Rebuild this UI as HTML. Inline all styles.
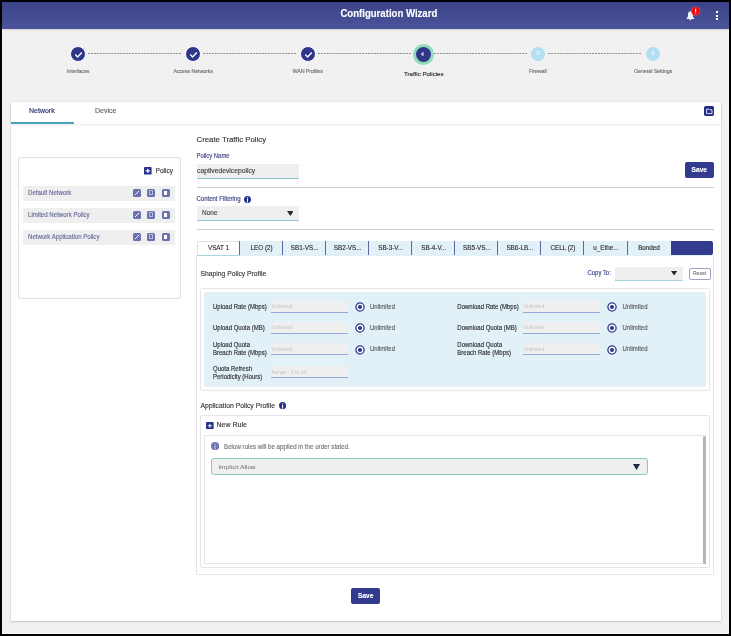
<!DOCTYPE html>
<html><head><meta charset="utf-8">
<style>
*{box-sizing:border-box;margin:0;padding:0}
html,body{width:731px;height:636px;overflow:hidden;background:#000;font-family:"Liberation Sans",sans-serif}
.a{position:absolute}
.t{position:absolute;white-space:nowrap;line-height:1}
.t,.lbl,.unl,.rowt{-webkit-text-stroke-width:0.12px}
#frame{position:absolute;left:2px;top:2px;width:727px;height:632px;background:#f1f1f1}
#hdr{position:absolute;left:2px;top:2px;width:727px;height:27px;background:linear-gradient(#3b4488,#4c5499);box-shadow:0 1px 1.5px rgba(60,60,40,.18)}
.stepc{position:absolute;width:16px;height:16px;border-radius:50%;background:#2f3689;border:1px solid #fff}
.dash{position:absolute;height:1.2px;background-image:linear-gradient(90deg,#8f8f8f 0,#8f8f8f 58%,transparent 58%);background-size:2.95px 1.2px}
.slab{color:#6e6e6e;font-size:5.4px;letter-spacing:-0.13px}
#card{position:absolute;left:11px;top:101.8px;width:710px;height:519.4px;background:#fff;box-shadow:0 1px 1.5px rgba(0,0,0,.16),0 0 1.5px rgba(0,0,0,.1)}
.ico{position:absolute;width:8px;height:8px;border-radius:1.5px;background:#6b70ae}
.row{position:absolute;left:23px;width:152px;height:15px;background:#efefef}
.rowt{position:absolute;left:5px;top:4.4px;font-size:6.1px;color:#64689a;transform:scaleY(1.08);transform-origin:0 85%;white-space:nowrap;line-height:1}
.tab{position:absolute;top:241px;height:14px;width:43px;background:#e2f0f7;border-left:1.5px solid #4c5290;font-size:6px;color:#333;text-align:center;line-height:14px}
.lbl{position:absolute;font-size:6px;color:#2a2a2a;-webkit-text-stroke:0.12px #2a2a2a;line-height:7.2px;white-space:nowrap;transform:scaleY(1.15);transform-origin:0 0}
.inp{position:absolute;width:77px;height:12px;background:#efefef;border-bottom:1px solid #9aa7dc}
.ph{position:absolute;left:1px;top:3.5px;font-size:5px;color:#c4c4c4;white-space:nowrap;line-height:1}
.radio{position:absolute;width:10px;height:10px}
.unl{position:absolute;font-size:6px;color:#585858;white-space:nowrap;line-height:1;transform:scaleY(1.2);transform-origin:0 85%}
</style></head><body>
<div id="root" style="position:absolute;left:0;top:0;width:731px;height:636px;will-change:transform">
<div id="frame"></div>
<div id="hdr"></div>
<div class="t" style="left:340.4px;top:9.1px;font-size:9.6px;font-weight:bold;color:#fff;transform:scaleY(1.05);transform-origin:0 85%">Configuration Wizard</div>
<!-- bell -->
<svg class="a" style="left:684px;top:7px" width="18" height="15" viewBox="0 0 18 15">
<path d="M2.7 12 L2.7 11.2 Q4 10.6 4 8 L4 7 Q4 4.5 6.4 4.3 Q8.8 4.5 8.8 7 L8.8 8 Q8.8 10.6 10.1 11.2 L10.1 12 Z" fill="#eef2fa"/>
<circle cx="6.4" cy="12.4" r="0.9" fill="#eef2fa"/>
<circle cx="11.7" cy="4.1" r="4.4" fill="#e90c12" stroke="#f06070" stroke-width="0.5"/>
<rect x="11.2" y="1.7" width="1" height="3.2" fill="#fff"/>
<rect x="11.2" y="5.6" width="1" height="0.9" fill="#fff"/>
</svg>
<div class="a" style="left:716px;top:11px;width:2px;height:2px;background:#fff"></div>
<div class="a" style="left:716px;top:14.5px;width:2px;height:2px;background:#fff"></div>
<div class="a" style="left:716px;top:18px;width:2px;height:2px;background:#fff"></div>

<!-- stepper -->
<div class="dash" style="left:88px;top:53px;width:94px"></div>
<div class="dash" style="left:203px;top:53px;width:94px"></div>
<div class="dash" style="left:318px;top:53px;width:93px"></div>
<div class="dash" style="left:434px;top:53px;width:92.5px"></div>
<div class="dash" style="left:548.4px;top:53px;width:93.4px"></div>

<div class="stepc" style="left:70px;top:45.7px"></div>
<div class="stepc" style="left:185.3px;top:45.5px"></div>
<div class="stepc" style="left:300px;top:45.5px"></div>
<svg class="a" style="left:71px;top:47px" width="15" height="15" viewBox="0 0 15 15"><path d="M4.3 7.6 L6.6 9.9 L10.8 5.4" stroke="#fff" stroke-width="1.4" fill="none"/></svg>
<svg class="a" style="left:186px;top:47px" width="15" height="15" viewBox="0 0 15 15"><path d="M4.3 7.6 L6.6 9.9 L10.8 5.4" stroke="#fff" stroke-width="1.4" fill="none"/></svg>
<svg class="a" style="left:301px;top:47px" width="15" height="15" viewBox="0 0 15 15"><path d="M4.3 7.6 L6.6 9.9 L10.8 5.4" stroke="#fff" stroke-width="1.4" fill="none"/></svg>
<div class="a" style="left:412.5px;top:44px;width:21px;height:21px;border-radius:50%;background:#8fdcb6"></div>
<div class="a" style="left:415.5px;top:47px;width:15px;height:15px;border-radius:50%;background:#2f3689"></div>
<div class="t" style="left:421px;top:51.5px;font-size:5px;font-weight:bold;color:#dfe2f5">4</div>
<div class="a" style="left:531px;top:46.5px;width:14px;height:14px;border-radius:50%;background:#b4dff0"></div>
<div class="t" style="left:536.4px;top:50.8px;font-size:5.6px;color:#f2fafd">5</div>
<div class="a" style="left:646px;top:46.5px;width:14px;height:14px;border-radius:50%;background:#b4dff0"></div>
<div class="t" style="left:651.4px;top:50.8px;font-size:5.6px;color:#f2fafd">6</div>

<div class="t slab" style="left:67px;top:68.5px">Interfaces</div>
<div class="t slab" style="left:173.5px;top:68.5px">Access Networks</div>
<div class="t slab" style="left:292.5px;top:68.5px">WAN Profiles</div>
<div class="t" style="left:404px;top:71.2px;font-size:6.15px;color:#333;-webkit-text-stroke:0.15px #333">Traffic Policies</div>
<div class="t slab" style="left:529px;top:68.5px">Firewall</div>
<div class="t slab" style="left:634px;top:68.5px">General Settings</div>

<!-- card -->
<div id="card"></div>
<div class="a" style="left:11px;top:101.8px;width:710px;height:22.2px;background:#fff;box-shadow:0 1px 2px rgba(0,0,0,.09)"></div>
<div class="a" style="left:11px;top:122px;width:63px;height:2px;background:#46a4c2"></div>
<div class="t" style="left:29px;top:106.7px;font-size:7px;color:#34387c;-webkit-text-stroke:0.2px #34387c">Network</div>
<div class="t" style="left:95px;top:106.9px;font-size:7px;color:#5e5e5e">Device</div>
<svg class="a" style="left:704px;top:106px" width="10" height="10" viewBox="0 0 10 10"><rect width="10" height="10" rx="1.8" fill="#222c8c"/><path d="M2.6 3.1H4.9L5.5 3.8H8V7.6H2.6Z" fill="none" stroke="#e6e8f6" stroke-width="0.95"/></svg>

<!-- left panel -->
<div class="a" style="left:18px;top:157px;width:163px;height:142px;border:1px solid #e2e2e2;border-radius:2px"></div>
<svg class="a" style="left:144.2px;top:167.4px" width="7.6" height="7.6" viewBox="0 0 8 8"><rect width="8" height="8" rx="1" fill="#27318c"/><path d="M4 1.8V6.2M1.8 4H6.2" stroke="#fff" stroke-width="1.3"/></svg>
<div class="t" style="left:155.5px;top:168px;font-size:6.6px;color:#333">Policy</div>

<div class="row" style="top:185.5px"><div class="rowt">Default Network</div></div>
<div class="row" style="top:207.5px"><div class="rowt">Limited Network Policy</div></div>
<div class="row" style="top:229.5px"><div class="rowt">Network Application Policy</div></div>
<!-- row icons -->
<div class="ico" style="left:133px;top:188.8px"></div><svg class="a" style="left:133px;top:188.8px" width="8" height="8" viewBox="0 0 8 8"><path d="M1.9 6.1 L6.1 1.9" stroke="#fff" stroke-width="0.95"/></svg>
<div class="ico" style="left:147.2px;top:188.8px"></div><div class="a" style="left:149.3px;top:189.9px;width:3.9px;height:5.6px;border:0.8px solid #b9bce0;border-radius:0.6px"></div>
<div class="ico" style="left:161.6px;top:188.8px"></div><div class="a" style="left:163.8px;top:190.60000000000002px;width:3.6px;height:4.4px;background:#fff"></div>
<div class="ico" style="left:133px;top:210.8px"></div><svg class="a" style="left:133px;top:210.8px" width="8" height="8" viewBox="0 0 8 8"><path d="M1.9 6.1 L6.1 1.9" stroke="#fff" stroke-width="0.95"/></svg>
<div class="ico" style="left:147.2px;top:210.8px"></div><div class="a" style="left:149.3px;top:211.9px;width:3.9px;height:5.6px;border:0.8px solid #b9bce0;border-radius:0.6px"></div>
<div class="ico" style="left:161.6px;top:210.8px"></div><div class="a" style="left:163.8px;top:212.60000000000002px;width:3.6px;height:4.4px;background:#fff"></div>
<div class="ico" style="left:133px;top:232.8px"></div><svg class="a" style="left:133px;top:232.8px" width="8" height="8" viewBox="0 0 8 8"><path d="M1.9 6.1 L6.1 1.9" stroke="#fff" stroke-width="0.95"/></svg>
<div class="ico" style="left:147.2px;top:232.8px"></div><div class="a" style="left:149.3px;top:233.9px;width:3.9px;height:5.6px;border:0.8px solid #b9bce0;border-radius:0.6px"></div>
<div class="ico" style="left:161.6px;top:232.8px"></div><div class="a" style="left:163.8px;top:234.60000000000002px;width:3.6px;height:4.4px;background:#fff"></div>

<!-- form -->
<div class="t" style="left:196.5px;top:136px;font-size:7.8px;color:#333">Create Traffic Policy</div>
<div class="t" style="left:196.5px;top:153.9px;font-size:5.9px;color:#45488a;-webkit-text-stroke:0.15px #45488a;transform:scaleY(1.18);transform-origin:0 85%">Policy Name</div>
<div class="a" style="left:196.5px;top:163.5px;width:102px;height:15px;background:#efefef;border-bottom:1px solid #8cc6d3"></div>
<div class="t" style="left:197px;top:167.6px;font-size:6.75px;color:#3c3c3c">captivedevicepolicy</div>
<div class="a" style="left:685px;top:162px;width:29px;height:16px;border-radius:2px;background:#333b8e"></div>
<div class="t" style="left:691.6px;top:167.1px;font-size:6.6px;font-weight:bold;color:#fff;transform:scaleY(1.15);transform-origin:0 85%">Save</div>
<div class="a" style="left:196.5px;top:186.5px;width:517.5px;height:1px;background:#cfcfcf"></div>

<div class="t" style="left:196.5px;top:195.7px;font-size:6px;color:#45488a;-webkit-text-stroke:0.15px #45488a;transform:scaleY(1.14);transform-origin:0 85%">Content Filtering</div>
<svg class="a" style="left:244.4px;top:196px" width="7.0" height="7.0" viewBox="0 0 7.0 7.0"><circle cx="3.5" cy="3.5" r="3.5" fill="#27318c"/><rect x="3.0" y="2.6" width="1" height="3.8249999999999997" fill="#fff"/><rect x="3.0" y="1.2249999999999999" width="1" height="0.9" fill="#fff"/></svg>
<div class="a" style="left:196.5px;top:206px;width:102px;height:15px;background:#efefef;border-bottom:1px solid #8cc6d3"></div>
<div class="t" style="left:202px;top:210px;font-size:6.5px;color:#444">None</div>
<svg class="a" style="left:286.7px;top:211px" width="6.6" height="5" viewBox="0 0 6.6 5"><path d="M0 0 L6.6 0 L3.3 5 Z" fill="#2a2a2a"/></svg>
<div class="a" style="left:196.5px;top:229px;width:517.5px;height:1px;background:#cfcfcf"></div>

<!-- tabs -->
<div class="a" style="left:197px;top:240.5px;width:516px;height:15px;border-radius:2px;background:#e2f0f7"></div>
<div class="a" style="left:197.0px;top:240.5px;width:43.05px;height:15px;background:#fff;border:1px solid #e0e0e0;border-right:none;border-bottom:1.5px solid #a9d6e0;border-radius:2px 0 0 0"></div><div class="t" style="left:197.0px;top:245px;width:43.05px;text-align:center;font-size:6.3px;color:#2a2a2a;transform:scaleY(1.12);transform-origin:50% 85%">VSAT 1</div>
<div class="a" style="left:239.05px;top:241px;width:1px;height:14px;background:#5f659f"></div><div class="t" style="left:240.05px;top:245px;width:43.05px;text-align:center;font-size:6.3px;color:#2a2a2a;transform:scaleY(1.12);transform-origin:50% 85%">LEO (2)</div>
<div class="a" style="left:282.1px;top:241px;width:1px;height:14px;background:#5f659f"></div><div class="t" style="left:283.1px;top:245px;width:43.05px;text-align:center;font-size:6.3px;color:#2a2a2a;transform:scaleY(1.12);transform-origin:50% 85%">SB1-VS...</div>
<div class="a" style="left:325.15px;top:241px;width:1px;height:14px;background:#5f659f"></div><div class="t" style="left:326.15px;top:245px;width:43.05px;text-align:center;font-size:6.3px;color:#2a2a2a;transform:scaleY(1.12);transform-origin:50% 85%">SB2-VS...</div>
<div class="a" style="left:368.2px;top:241px;width:1px;height:14px;background:#5f659f"></div><div class="t" style="left:369.2px;top:245px;width:43.05px;text-align:center;font-size:6.3px;color:#2a2a2a;transform:scaleY(1.12);transform-origin:50% 85%">SB-3-V...</div>
<div class="a" style="left:411.25px;top:241px;width:1px;height:14px;background:#5f659f"></div><div class="t" style="left:412.25px;top:245px;width:43.05px;text-align:center;font-size:6.3px;color:#2a2a2a;transform:scaleY(1.12);transform-origin:50% 85%">SB-4-V...</div>
<div class="a" style="left:454.29999999999995px;top:241px;width:1px;height:14px;background:#5f659f"></div><div class="t" style="left:455.29999999999995px;top:245px;width:43.05px;text-align:center;font-size:6.3px;color:#2a2a2a;transform:scaleY(1.12);transform-origin:50% 85%">SB5-VS...</div>
<div class="a" style="left:497.34999999999997px;top:241px;width:1px;height:14px;background:#5f659f"></div><div class="t" style="left:498.34999999999997px;top:245px;width:43.05px;text-align:center;font-size:6.3px;color:#2a2a2a;transform:scaleY(1.12);transform-origin:50% 85%">SB6-LB...</div>
<div class="a" style="left:540.4px;top:241px;width:1px;height:14px;background:#5f659f"></div><div class="t" style="left:541.4px;top:245px;width:43.05px;text-align:center;font-size:6.3px;color:#2a2a2a;transform:scaleY(1.12);transform-origin:50% 85%">CELL (2)</div>
<div class="a" style="left:583.45px;top:241px;width:1px;height:14px;background:#5f659f"></div><div class="t" style="left:584.45px;top:245px;width:43.05px;text-align:center;font-size:6.3px;color:#2a2a2a;transform:scaleY(1.12);transform-origin:50% 85%">u_Ethe...</div>
<div class="a" style="left:626.5px;top:241px;width:1px;height:14px;background:#5f659f"></div><div class="t" style="left:627.5px;top:245px;width:43.05px;text-align:center;font-size:6.3px;color:#2a2a2a;transform:scaleY(1.12);transform-origin:50% 85%">Bonded</div>
<div class="a" style="left:670.55px;top:241px;width:42.450000000000045px;height:14px;background:#333b8e;border-radius:0 2px 2px 0"></div>

<!-- shaping panel outer -->
<div class="a" style="left:196px;top:255px;width:518px;height:320px;border:1px solid #e5e5e5;border-top:none;border-radius:0 0 2px 2px"></div>
<div class="t" style="left:200.5px;top:270.6px;font-size:6.75px;color:#333;transform:scaleY(1.14);transform-origin:0 85%">Shaping Policy Profile</div>
<div class="t" style="left:587.5px;top:270.8px;font-size:5.95px;color:#45488a;-webkit-text-stroke:0.15px #45488a;transform:scaleY(1.14);transform-origin:0 85%">Copy To:</div>
<div class="a" style="left:614.5px;top:266.5px;width:68.5px;height:14px;background:#efefef;border-bottom:1px solid #a9d5de"></div>
<svg class="a" style="left:671.2px;top:271.3px" width="6.2" height="4.6" viewBox="0 0 6.2 4.6"><path d="M0 0 L6.2 0 L3.1 4.6 Z" fill="#2a2a2a"/></svg>
<div class="a" style="left:689px;top:267.5px;width:21.5px;height:12px;border:1px solid #9ea1c4;border-radius:2px;background:#fff"></div>
<div class="t" style="left:693px;top:271px;font-size:5px;color:#777">Reset</div>

<div class="a" style="left:200px;top:288px;width:510px;height:102.8px;border:1px solid #e5e5e5;border-radius:2.5px"></div>
<div class="a" style="left:204.2px;top:291.6px;width:502px;height:95px;background:#e2f1f8;border-radius:2px"></div>
<div class="lbl" style="left:213px;top:303.1px">Upload Rate (Mbps)</div>
<div class="inp" style="left:270.5px;top:300.5px"><div class="ph">Unlimited</div></div>
<svg class="radio" style="left:354.8px;top:302.0px" viewBox="0 0 10 10"><circle cx="5" cy="5" r="4.1" fill="#fff" stroke="#2f3689" stroke-width="1.3"/><circle cx="5" cy="5" r="2.1" fill="#2f3689"/></svg>
<div class="unl" style="left:370px;top:303.5px">Unlimited</div>
<div class="lbl" style="left:457.3px;top:303.1px">Download Rate (Mbps)</div>
<div class="inp" style="left:522.5px;top:300.5px"><div class="ph">Unlimited</div></div>
<svg class="radio" style="left:607.4px;top:302.0px" viewBox="0 0 10 10"><circle cx="5" cy="5" r="4.1" fill="#fff" stroke="#2f3689" stroke-width="1.3"/><circle cx="5" cy="5" r="2.1" fill="#2f3689"/></svg>
<div class="unl" style="left:622.5px;top:303.5px">Unlimited</div>
<div class="lbl" style="left:213px;top:324.2px">Upload Quota (MB)</div>
<div class="inp" style="left:270.5px;top:321.5px"><div class="ph">Unlimited</div></div>
<svg class="radio" style="left:354.8px;top:323.0px" viewBox="0 0 10 10"><circle cx="5" cy="5" r="4.1" fill="#fff" stroke="#2f3689" stroke-width="1.3"/><circle cx="5" cy="5" r="2.1" fill="#2f3689"/></svg>
<div class="unl" style="left:370px;top:324.5px">Unlimited</div>
<div class="lbl" style="left:457.3px;top:324.2px">Download Quota (MB)</div>
<div class="inp" style="left:522.5px;top:321.5px"><div class="ph">Unlimited</div></div>
<svg class="radio" style="left:607.4px;top:323.0px" viewBox="0 0 10 10"><circle cx="5" cy="5" r="4.1" fill="#fff" stroke="#2f3689" stroke-width="1.3"/><circle cx="5" cy="5" r="2.1" fill="#2f3689"/></svg>
<div class="unl" style="left:622.5px;top:324.5px">Unlimited</div>
<div class="lbl" style="left:213px;top:341.1px">Upload Quota<br>Breach Rate (Mbps)</div>
<div class="inp" style="left:270.5px;top:343px"><div class="ph">Unlimited</div></div>
<svg class="radio" style="left:354.8px;top:344.5px" viewBox="0 0 10 10"><circle cx="5" cy="5" r="4.1" fill="#fff" stroke="#2f3689" stroke-width="1.3"/><circle cx="5" cy="5" r="2.1" fill="#2f3689"/></svg>
<div class="unl" style="left:370px;top:346px">Unlimited</div>
<div class="lbl" style="left:457.3px;top:341.1px">Download Quota<br>Breach Rate (Mbps)</div>
<div class="inp" style="left:522.5px;top:343px"><div class="ph">Unlimited</div></div>
<svg class="radio" style="left:607.4px;top:344.5px" viewBox="0 0 10 10"><circle cx="5" cy="5" r="4.1" fill="#fff" stroke="#2f3689" stroke-width="1.3"/><circle cx="5" cy="5" r="2.1" fill="#2f3689"/></svg>
<div class="unl" style="left:622.5px;top:346px">Unlimited</div>
<div class="lbl" style="left:213px;top:365.3px">Quota Refresh<br>Periodicity (Hours)</div>
<div class="inp" style="left:270.5px;top:366px"><div class="ph">Range - 0 to 24</div></div>

<!-- application policy -->
<div class="t" style="left:200.5px;top:402.6px;font-size:6.8px;color:#333;transform:scaleY(1.14);transform-origin:0 85%">Application Policy Profile</div>
<svg class="a" style="left:278.7px;top:401.9px" width="7.2" height="7.2" viewBox="0 0 7.2 7.2"><circle cx="3.6" cy="3.6" r="3.6" fill="#27318c"/><rect x="3.1" y="2.7" width="1" height="3.92" fill="#fff"/><rect x="3.1" y="1.26" width="1" height="0.9" fill="#fff"/></svg>
<div class="a" style="left:200px;top:415px;width:510px;height:153px;border:1px solid #e5e5e5;border-radius:2px"></div>
<svg class="a" style="left:206.2px;top:421.6px" width="7.7" height="7.6" viewBox="0 0 8 8"><rect width="8" height="8" rx="1" fill="#27318c"/><path d="M4 1.9V6.1M1.9 4H6.1" stroke="#fff" stroke-width="1"/></svg>
<div class="t" style="left:216.5px;top:420.8px;font-size:7px;color:#333">New Rule</div>
<div class="a" style="left:204px;top:435px;width:502.5px;height:129px;border:1px solid #e5e5e5;border-right:none"></div>
<div class="a" style="left:702.5px;top:435.5px;width:3.2px;height:128px;border-radius:2px;background:#b4b4bc"></div>
<svg class="a" style="left:210.9px;top:442.29999999999995px" width="8.2" height="8.2" viewBox="0 0 8.2 8.2"><circle cx="4.1" cy="4.1" r="4.1" fill="#7075b3"/><rect x="3.5999999999999996" y="3.1999999999999997" width="1" height="4.395" fill="#c9cbe8"/><rect x="3.5999999999999996" y="1.4349999999999998" width="1" height="0.9" fill="#c9cbe8"/></svg>
<div class="t" style="left:224px;top:443.5px;font-size:6.2px;color:#737373;transform:scaleY(1.13);transform-origin:0 85%">Below rules will be applied in the order stated.</div>
<div class="a" style="left:211px;top:458.1px;width:436.6px;height:17.4px;border:1px solid #86cfa7;border-radius:3px;background:#efefef"></div>
<div class="t" style="left:218.5px;top:464.2px;font-size:6.1px;letter-spacing:0.16px;color:#666;-webkit-text-stroke-width:0">Implicit Allow</div>
<svg class="a" style="left:632.5px;top:464.3px" width="7" height="6" viewBox="0 0 7 6"><path d="M0 0 L7 0 L3.5 6 Z" fill="#1e2648"/></svg>

<!-- bottom save -->
<div class="a" style="left:351px;top:588px;width:29px;height:16px;border-radius:2px;background:#333b8e"></div>
<div class="t" style="left:358px;top:593.2px;font-size:6.6px;font-weight:bold;color:#fff;transform:scaleY(1.15);transform-origin:0 85%">Save</div>

<div class="a" style="left:2px;top:633px;width:727px;height:1px;background:#fafafa"></div>
</div>
</body></html>
